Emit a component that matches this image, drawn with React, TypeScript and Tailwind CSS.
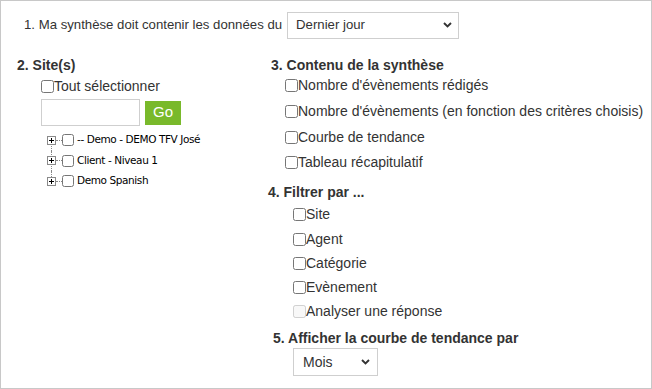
import React from "react";

const Chevron = () => (
  <svg width="9" height="6" viewBox="0 0 9 6" className="shrink-0">
    <path d="M1 1 L4.5 4.5 L8 1" fill="none" stroke="#333" strokeWidth="1.9" />
  </svg>
);

const FakeSelect = ({ label, className }: { label: string; className: string }) => (
  <div
    className={
      "flex items-center justify-between border border-[#cfcfcf] bg-white box-border text-[#333] " +
      className
    }
  >
    <span>{label}</span>
    <Chevron />
  </div>
);

const Check = ({ disabled }: { disabled?: boolean }) => (
  <input
    type="checkbox"
    disabled={disabled}
    className="m-0 w-[13px] h-[13px] shrink-0"
  />
);

const TreeRow = ({ label, last, first }: { label: string; last?: boolean; first?: boolean }) => (
  <div className="relative flex items-center h-[20.5px]">
    {!last && (
      <div className="absolute left-[10px] top-[10px] h-[20.5px] border-l border-dotted border-[#888]" />
    )}
    {!first && (
      <div className="absolute left-[10px] top-0 h-[6px] border-l border-dotted border-[#888]" />
    )}
    <div className="relative z-10 w-[9px] h-[9px] ml-[6px] border border-[#8a8a8a] bg-white flex items-center justify-center box-border">
      <svg width="7" height="7" viewBox="0 0 7 7">
        <path d="M1 3.5 H6 M3.5 1 V6" stroke="#000" strokeWidth="1" />
      </svg>
    </div>
    <div className="w-[6px] border-t border-dotted border-[#888]" />
    <input type="checkbox" className="m-0 w-[12px] h-[12px] shrink-0" />
    <span
      className="ml-[3px] text-[10.5px] text-black"
      style={{ fontFamily: "'DejaVu Sans', Verdana, sans-serif", letterSpacing: "-0.4px" }}
    >
      {label}
    </span>
  </div>
);

export default function App() {
  return (
    <div
      className="w-[652px] h-[389px] border border-[#c8c8c8] box-border bg-white text-[14px] text-[#333] overflow-hidden"
      style={{ fontFamily: "'Liberation Sans', Arial, sans-serif" }}
    >
      {/* Row 1 */}
      <div className="flex items-center pl-[23px] pt-[10px] h-[38px] text-[13.2px]">
        <span>1. Ma synthèse doit contenir les données du</span>
        <FakeSelect label="Dernier jour" className="ml-[5px] w-[172px] h-[27px] pl-[8px] pr-[6px]" />
      </div>

      <div className="flex mt-[12px]">
        {/* Left column */}
        <div className="w-[265px] shrink-0 pl-[16px]">
          <div className="h-[28px] flex items-center font-bold">2. Site(s)</div>
          <div className="pl-[24px]">
            <label className="flex items-center h-[15px]">
              <Check />
              <span>Tout sélectionner</span>
            </label>
            <div className="flex items-center mt-[5px] h-[27px]">
              <div className="w-[99px] h-[27px] border border-[#cfcfcf] box-border bg-white" />
              <div className="ml-[5px] w-[36px] h-[24px] bg-[#79b92b] text-white text-[15px] flex items-center justify-center">
                Go
              </div>
            </div>
            <div className="mt-[4px]">
              <TreeRow label="-- Demo - DEMO TFV José" first />
              <TreeRow label="Client - Niveau 1" />
              <TreeRow label="Demo Spanish" last />
            </div>
          </div>
        </div>

        {/* Right column */}
        <div className="pl-[1px] whitespace-nowrap">
          <div className="h-[28px] flex items-center font-bold pl-[4px]">3. Contenu de la synthèse</div>
          <div className="pl-[18px] -mt-[6px]">
            {[
              "Nombre d'évènements rédigés",
              "Nombre d'évènements (en fonction des critères choisis)",
              "Courbe de tendance",
              "Tableau récapitulatif",
            ].map((t) => (
              <label key={t} className="flex items-center h-[25.7px]">
                <Check />
                <span>{t}</span>
              </label>
            ))}
          </div>
          <div className="h-[28px] flex items-center font-bold pl-[1px] mt-[3px]">4. Filtrer par ...</div>
          <div className="pl-[26px] -mt-[4px]">
            {["Site", "Agent", "Catégorie", "Evènement"].map((t) => (
              <label key={t} className="flex items-center h-[24.25px]">
                <Check />
                <span>{t}</span>
              </label>
            ))}
            <label className="flex items-center h-[24.25px]">
              <Check disabled />
              <span>Analyser une réponse</span>
            </label>
          </div>
          <div className="h-[28px] flex items-center font-bold pl-[6px]">
            5. Afficher la courbe de tendance par
          </div>
          <div className="pl-[26px] -mt-[4px]">
            <FakeSelect label="Mois" className="w-[85px] h-[28px] pl-[9px] pr-[7px]" />
          </div>
        </div>
      </div>
    </div>
  );
}
